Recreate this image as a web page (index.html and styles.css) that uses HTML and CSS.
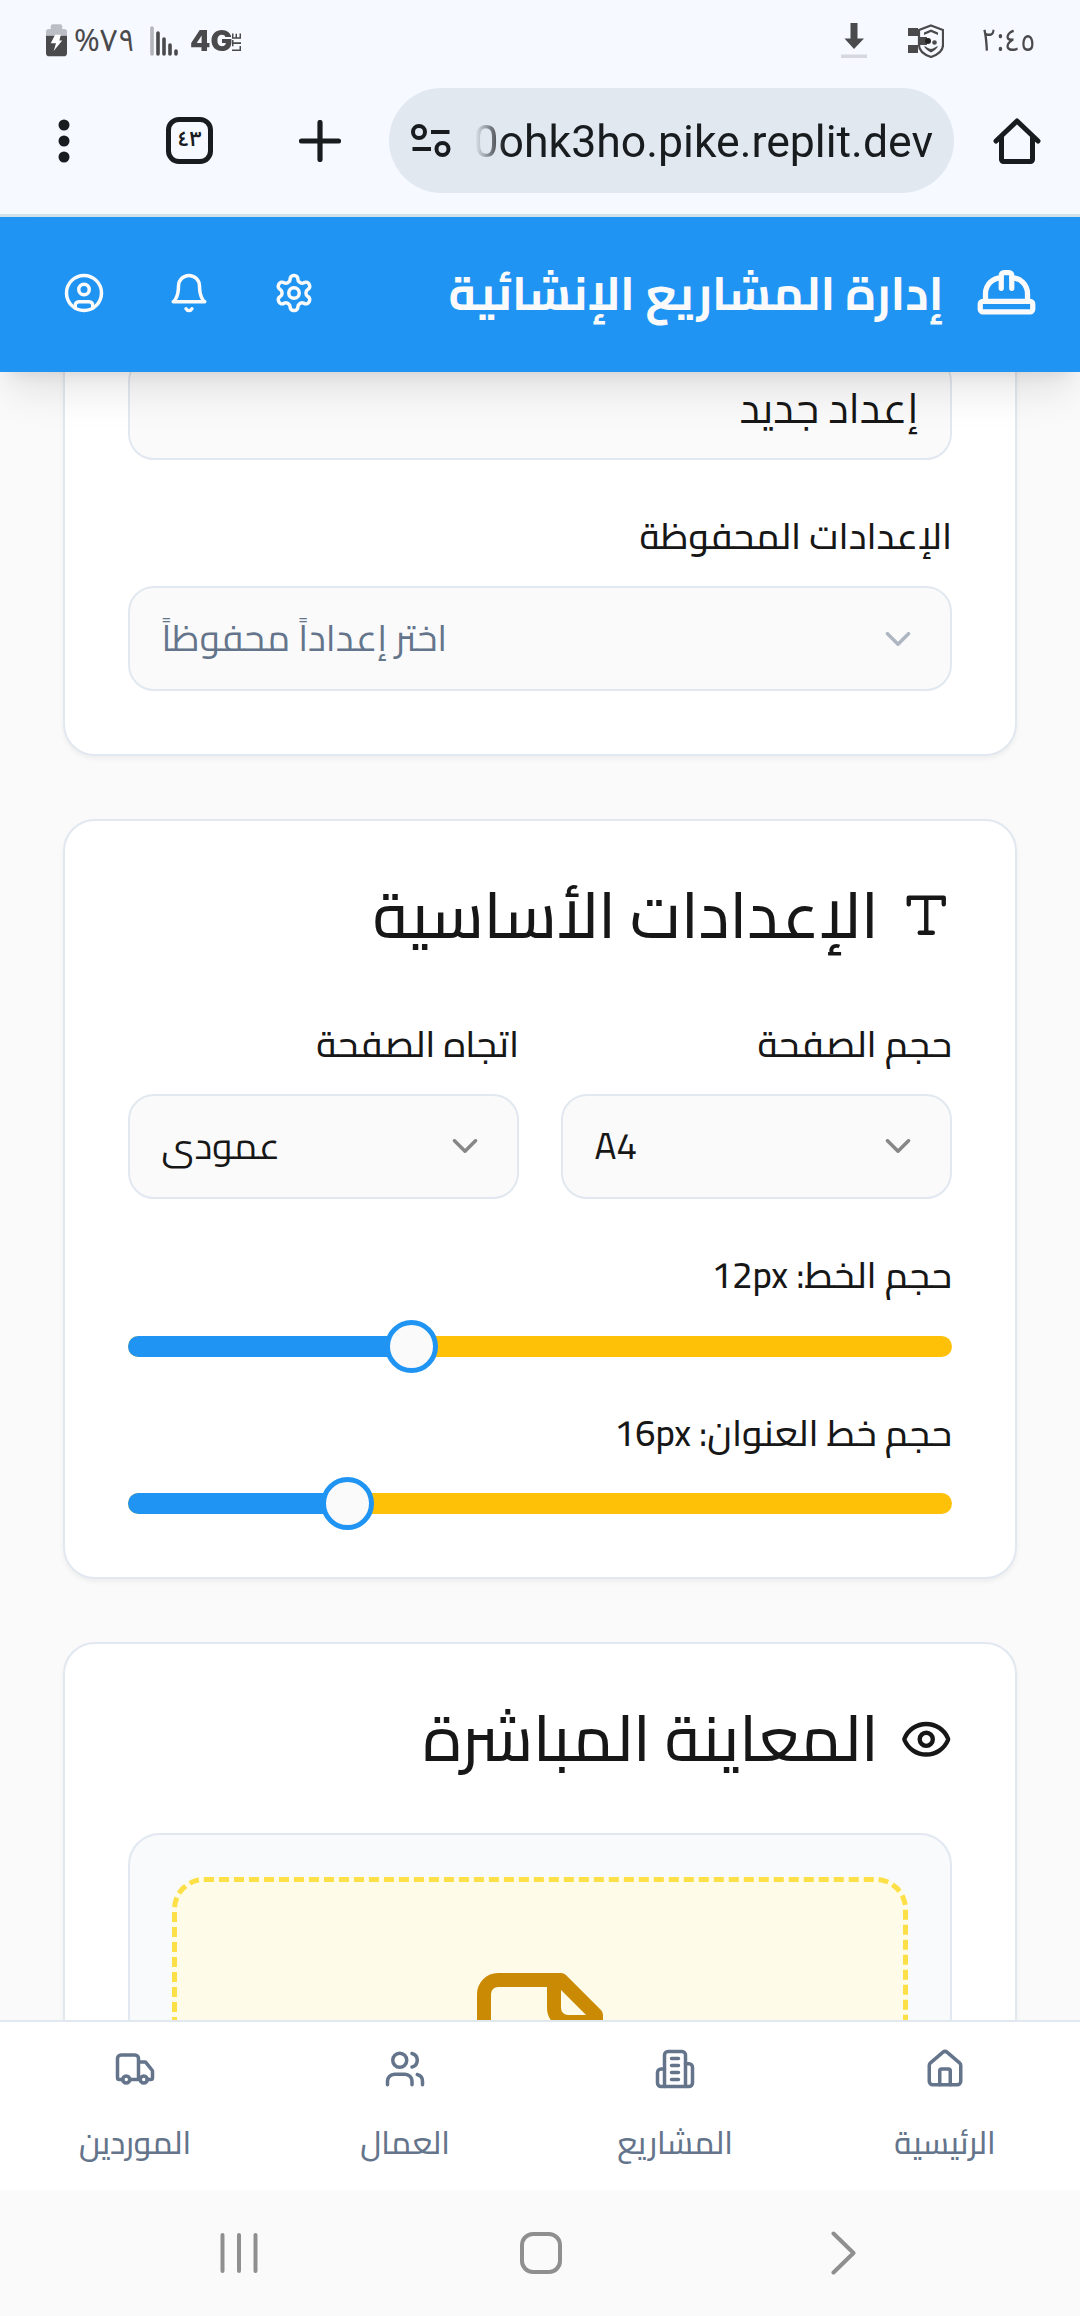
FILE: index.html
```html
<!DOCTYPE html>
<html lang="ar" dir="rtl">
<head>
<meta charset="utf-8">
<title>إدارة المشاريع الإنشائية</title>
<link rel="stylesheet" href="styles.css">
</head>
<body>
<div class="screen">

  <div class="status" dir="ltr">
    <svg class="battery" viewBox="0 0 22 34">
      <path d="M7 0h8a2 2 0 0 1 2 2v3H5V2a2 2 0 0 1 2-2z" fill="#bbbec4"/>
      <path d="M3 5h16a3 3 0 0 1 3 3v4H0V8a3 3 0 0 1 3-3z" fill="#bbbec4"/>
      <path d="M0 12h22v18a3.500 3.500 0 0 1-3.500 3.500h-15A3.500 3.500 0 0 1 0 30z" fill="#4a4a4c"/>
      <path d="M9.500 11h6l-1.500 6h3L8 28l2.500-8H5z" fill="#fff"/>
    </svg>
    <span class="percent">%٧٩</span>
    <svg class="signal" viewBox="0 0 28 30">
      <path d="M2 2v26" stroke="#b3b5ba"/>
      <path d="M8 7v21M14 13v15M20 19v9M26 25v3" stroke="#4a4a4c"/>
    </svg>
    <span class="net">4G</span><span class="lte">LTE</span>
    <svg class="download" viewBox="0 0 26 36">
      <path d="M9.500 0h7v15.500H23L13 26 3.500 15.500h6z" fill="#4a4a4c"/>
      <path d="M0 31.500h26v3.500H0z" fill="#d6d8dd"/>
    </svg>
    <svg class="shield" viewBox="0 0 36 34">
      <path d="M0 4h10v8H0zM0 21h10v8H0zM10 13h9v8h-9z" fill="#4a4a4c"/>
      <path d="M23 1.500 35 6v15c0 6-6 10-12 12-6-2-12-6-12-12V6z" fill="none" stroke="#4a4a4c" stroke-width="2.200"/>
      <path d="M16 11v-2.500l7-3 7 3V11l-7-3z" fill="#4a4a4c"/>
      <circle cx="20" cy="17" r="3" fill="#222"/>
      <circle cx="26.500" cy="18.500" r="2.300" fill="#4a4a4c"/>
      <path d="M16 22c3 .5 4 3 7 3s4-2.500 7-3c-1 3-4 5-7 6.500-3-1.500-6-3.500-7-6.500z" fill="#4a4a4c"/>
    </svg>
    <span class="clock">٢:٤٥</span>
  </div>

  <div class="toolbar" dir="ltr">
    <svg class="dots" viewBox="0 0 12 44"><circle cx="6" cy="6" r="5.500"/><circle cx="6" cy="22" r="5.500"/><circle cx="6" cy="38" r="5.500"/></svg>
    <span class="tabs">٤٣</span>
    <svg class="plus" viewBox="0 0 42 42"><path d="M21 2.500v37M2.500 21h37"/></svg>
    <div class="url">
      <svg class="tune" viewBox="0 0 40 34"><circle cx="8" cy="8" r="6"/><path d="M20 8h18.500M1.500 25H20"/><circle cx="31.500" cy="25" r="6"/></svg>
      <span class="address">0ohk3ho.pike.replit.dev</span>
    </div>
    <svg class="home" viewBox="0 0 48 48"><path d="M3 24 24 4l21 20M8.500 20v22.500a2 2 0 0 0 2 2h27a2 2 0 0 0 2-2V20"/></svg>
  </div>

  <header class="header">
    <svg class="icon hat" viewBox="0 0 24 24"><path d="M2 18a1 1 0 0 0 1 1h18a1 1 0 0 0 1-1v-2a1 1 0 0 0-1-1H3a1 1 0 0 0-1 1v2z"/><path d="M10 10V5a1 1 0 0 1 1-1h2a1 1 0 0 1 1 1v5"/><path d="M4 15v-3a6 6 0 0 1 6-6"/><path d="M14 6a6 6 0 0 1 6 6v3"/></svg>
    <h1 class="brand">إدارة المشاريع الإنشائية</h1>
    <div class="actions">
      <svg class="icon md" viewBox="0 0 24 24"><path d="M12.220 2h-.440a2 2 0 0 0-2 2v.180a2 2 0 0 1-1 1.730l-.430.250a2 2 0 0 1-2 0l-.150-.080a2 2 0 0 0-2.730.730l-.220.380a2 2 0 0 0 .730 2.730l.150.100a2 2 0 0 1 1 1.720v.510a2 2 0 0 1-1 1.740l-.150.090a2 2 0 0 0-.730 2.730l.220.380a2 2 0 0 0 2.730.730l.150-.080a2 2 0 0 1 2 0l.430.250a2 2 0 0 1 1 1.730V20a2 2 0 0 0 2 2h.440a2 2 0 0 0 2-2v-.180a2 2 0 0 1 1-1.730l.430-.250a2 2 0 0 1 2 0l.150.080a2 2 0 0 0 2.730-.730l.220-.390a2 2 0 0 0-.730-2.730l-.150-.080a2 2 0 0 1-1-1.740v-.500a2 2 0 0 1 1-1.740l.150-.090a2 2 0 0 0 .730-2.730l-.220-.380a2 2 0 0 0-2.730-.730l-.150.080a2 2 0 0 1-2 0l-.430-.250a2 2 0 0 1-1-1.730V4a2 2 0 0 0-2-2z"/><circle cx="12" cy="12" r="3"/></svg>
      <svg class="icon md" viewBox="0 0 24 24"><path d="M6 8a6 6 0 0 1 12 0c0 7 3 9 3 9H3s3-2 3-9"/><path d="M10.300 21a1.940 1.940 0 0 0 3.400 0"/></svg>
      <svg class="icon md" viewBox="0 0 24 24"><circle cx="12" cy="12" r="10"/><circle cx="12" cy="10" r="3"/><path d="M7 20.662V19a2 2 0 0 1 2-2h6a2 2 0 0 1 2 2v1.662"/></svg>
    </div>
  </header>

  <main class="content">
    <section class="card card-name">
      <div class="input">إعداد جديد</div>
      <div class="field">
        <span class="label">الإعدادات المحفوظة</span>
        <div class="select muted"><svg class="icon md chevron" viewBox="0 0 24 24"><path d="m6 9 6 6 6-6"/></svg><span class="value">اختر إعداداً محفوظاً</span></div>
      </div>
    </section>

    <section class="card">
      <h2 class="title"><svg class="icon lg" viewBox="0 0 24 24"><path d="M4 7V4h16v3M9 20h6M12 4v16"/></svg>الإعدادات الأساسية</h2>
      <div class="form">
        <div class="pair">
          <div class="group"><span class="label">حجم الصفحة</span>
            <div class="select"><svg class="icon md chevron" viewBox="0 0 24 24"><path d="m6 9 6 6 6-6"/></svg><span class="value">A4</span></div></div>
          <div class="group"><span class="label">اتجاه الصفحة</span>
            <div class="select"><svg class="icon md chevron" viewBox="0 0 24 24"><path d="m6 9 6 6 6-6"/></svg><span class="value clamp">عمودي</span></div></div>
        </div>
        <div class="field slider-field"><span class="label">حجم الخط: 12px</span>
          <div class="slider" dir="ltr"><span class="range" style="width:34.350%"></span><span class="thumb"></span></div></div>
        <div class="field slider-field"><span class="label">حجم خط العنوان: 16px</span>
          <div class="slider" dir="ltr"><span class="range" style="width:26.550%"></span><span class="thumb"></span></div></div>
      </div>
    </section>

    <section class="card card-preview">
      <h2 class="title"><svg class="icon lg" viewBox="0 0 24 24"><path d="M2.062 12.348a1 1 0 0 1 0-.696 10.750 10.750 0 0 1 19.876 0 1 1 0 0 1 0 .696 10.750 10.750 0 0 1-19.876 0"/><circle cx="12" cy="12" r="3"/></svg>المعاينة المباشرة</h2>
      <div class="preview"><div class="dropzone"><svg class="icon doc" viewBox="0 0 24 24"><path d="M15 2H6a2 2 0 0 0-2 2v16a2 2 0 0 0 2 2h12a2 2 0 0 0 2-2V7Z"/><path d="M14 2v4a2 2 0 0 0 2 2h4"/></svg></div></div>
    </section>
  </main>

  <nav class="tabbar">
    <a class="tab"><svg class="icon md" viewBox="0 0 24 24"><path d="M15 21v-8a1 1 0 0 0-1-1h-4a1 1 0 0 0-1 1v8"/><path d="M3 10a2 2 0 0 1 .709-1.528l7-5.999a2 2 0 0 1 2.582 0l7 5.999A2 2 0 0 1 21 10v9a2 2 0 0 1-2 2H5a2 2 0 0 1-2-2z"/></svg>الرئيسية</a>
    <a class="tab"><svg class="icon md" viewBox="0 0 24 24"><path d="M6 22V4a2 2 0 0 1 2-2h8a2 2 0 0 1 2 2v18Z"/><path d="M6 12H4a2 2 0 0 0-2 2v6a2 2 0 0 0 2 2h2M18 9h2a2 2 0 0 1 2 2v9a2 2 0 0 1-2 2h-2M10 6h4M10 10h4M10 14h4M10 18h4"/></svg>المشاريع</a>
    <a class="tab"><svg class="icon md" viewBox="0 0 24 24"><path d="M16 21v-2a4 4 0 0 0-4-4H6a4 4 0 0 0-4 4v2"/><circle cx="9" cy="7" r="4"/><path d="M22 21v-2a4 4 0 0 0-3-3.870M16 3.130a4 4 0 0 1 0 7.750"/></svg>العمال</a>
    <a class="tab"><svg class="icon md" viewBox="0 0 24 24"><path d="M14 18V6a2 2 0 0 0-2-2H4a2 2 0 0 0-2 2v11a1 1 0 0 0 1 1h2M15 18H9M19 18h2a1 1 0 0 0 1-1v-3.650a1 1 0 0 0-.220-.624l-3.480-4.350A1 1 0 0 0 17.520 8H14"/><circle cx="17" cy="18" r="2"/><circle cx="7" cy="18" r="2"/></svg>الموردين</a>
  </nav>

  <div class="system" dir="ltr">
    <svg class="sys recents" viewBox="0 0 38 42"><path d="M2.500 3v36M19 3v36M35.500 3v36"/></svg>
    <svg class="sys homekey" viewBox="0 0 42 42"><rect x="2" y="2" width="38" height="38" rx="11"/></svg>
    <svg class="sys back" viewBox="0 0 26 44"><path d="M2.500 2.500 22.500 22l-20 19.500"/></svg>
  </div>
</div>
</body>
</html>
```
FILE: styles.css
```css
* { box-sizing: border-box; }
body { margin: 0; font-family: Cairo, "Noto Sans Arabic", "DejaVu Sans", sans-serif; color: #171717; background: #fafafa; }
.screen { width: 1080px; height: 2316px; display: flex; flex-direction: column; overflow: hidden; }
svg { display: block; flex: none; }
h1, h2 { margin: 0; }

.icon { fill: none; stroke: currentColor; stroke-width: 2; stroke-linecap: round; stroke-linejoin: round; }
.md { width: 42px; height: 42px; }
.lg { width: 52.5px; height: 52.5px; }

/* phone status bar */
.status { flex: none; height: 81px; padding-left: 46px; display: flex; align-items: center; background: #f6f9ff; color: #4a4a4c; font-family: "Noto Sans Arabic", "Noto Sans", sans-serif; white-space: nowrap; }
.battery { width: 21px; height: 33px; }
.percent { width: 76px; margin-left: 7px; font-size: 31px; line-height: 40px; }
.signal { width: 28px; height: 30px; fill: none; stroke-width: 3.6; stroke-linecap: round; }
.net { width: 40px; margin-left: 12px; font: 900 28px/40px Inter, sans-serif; transform: scaleX(1.04); transform-origin: left; }
.lte { width: 12px; height: 24px; margin-left: 1px; writing-mode: vertical-rl; transform: rotate(180deg) scaleY(.9); font: 700 12px/12px Inter, sans-serif; }
.download { width: 26px; height: 36px; margin-left: 598px; }
.shield { width: 36px; height: 34px; margin-left: 41px; }
.clock { margin-left: 37px; font-size: 31px; line-height: 40px; transform: scaleX(.89); transform-origin: left; }

/* browser toolbar */
.toolbar { flex: none; height: 136px; padding: 7px 0 21px 58px; display: flex; align-items: center; background: #f6f9ff; border-bottom: 3px solid #d3e2ea; color: #191c1f; }
.dots { width: 12px; height: 44px; fill: currentColor; }
.tabs { width: 47px; height: 47px; margin-left: 96px; border: 5px solid; border-radius: 13px; font: 600 21px/34px "Noto Sans Arabic", sans-serif; text-align: center; }
.plus { width: 42px; height: 42px; margin-left: 86px; fill: none; stroke: currentColor; stroke-width: 5.2; stroke-linecap: round; }
.url { width: 565px; height: 105px; margin-left: 48px; padding: 0 21px 0 22px; display: flex; align-items: center; justify-content: space-between; background: #e1e8f0; border-radius: 53px; }
.tune { width: 40px; height: 34px; fill: none; stroke: currentColor; stroke-width: 4; }
.address { width: 462px; padding-top: 2px; display: flex; justify-content: flex-end; font: 44.6px/60px Roboto, sans-serif; -webkit-mask-image: linear-gradient(90deg, transparent 4px, #000 34px); mask-image: linear-gradient(90deg, transparent 4px, #000 34px); }
.home { width: 48px; height: 48px; margin-left: 39px; fill: none; stroke: currentColor; stroke-width: 5; stroke-linecap: round; stroke-linejoin: round; }

/* app header */
.header { flex: none; position: relative; z-index: 1; height: 155px; padding: 0 42px 3px 63px; display: flex; align-items: center; background: #2094f3; color: #fafafa; box-shadow: 0 26px 39px -8px rgba(0,0,0,.1), 0 10px 16px -10px rgba(0,0,0,.1); }
.hat { width: 63px; height: 63px; }
.brand { margin-right: 31.5px; font-size: 47.25px; font-weight: 700; line-height: 74px; white-space: nowrap; }
.actions { margin-right: auto; display: flex; gap: 63px; }

/* scrolled form area */
.content { flex: 1; min-height: 0; overflow: hidden; padding: 0 63px; }
.card { padding: 63px; border: 2px solid #e2e8f0; border-radius: 32px; background: #fff; box-shadow: 0 3px 5px rgba(0,0,0,.05); }
.card + .card { margin-top: 63px; }
.card-name { height: 504px; margin-top: -120px; display: flex; flex-direction: column; justify-content: flex-end; }
.input, .select { height: 105px; padding: 0 31.5px; display: flex; align-items: center; border: 2px solid #e2e8f0; border-radius: 26px; background: #fafafa; }
.input { font-size: 42px; line-height: 63px; }
.select { justify-content: space-between; font-size: 36.75px; }
.value { height: 52.5px; line-height: 52.5px; }
.clamp { height: 51px; margin-bottom: 1.5px; overflow: hidden; }
.chevron { opacity: .5; }
.muted { color: #64748b; }
.field { margin-top: 57px; display: flex; flex-direction: column; gap: 31px; }
.group { display: flex; flex-direction: column; gap: 31px; }
.label { padding-top: 1px; font-size: 36.75px; line-height: 36.75px; font-weight: 500; }
.title { display: flex; align-items: center; gap: 21px; font-size: 64px; line-height: 63px; font-weight: 500; }
.form { margin-top: 78px; }
.pair { display: grid; grid-template-columns: 1fr 1fr; gap: 42px; }
.slider-field { gap: 42px; }
.slider { height: 21px; display: flex; align-items: center; border-radius: 11px; background: #ffc107; }
.range { height: 21px; border-radius: 11px 0 0 11px; background: #2094f3; }
.thumb { flex: none; width: 53px; height: 53px; margin-left: -26px; border: 5px solid #2094f3; border-radius: 50%; background: #fafafa; }
.card-preview { height: 900px; }
.preview { height: 700px; margin-top: 63px; padding: 42px; border: 2px solid #e2e8f0; border-radius: 32px; background: #f8fafc; }
.dropzone { height: 610px; padding-top: 84px; border: 5.25px dashed #fde047; border-radius: 32px; background: #fefce8; color: #ca8a04; }
.doc { width: 168px; height: 168px; margin: 0 auto; }

/* bottom navigation */
.tabbar { flex: none; height: 170px; display: grid; grid-template-columns: repeat(4, 1fr); border-top: 2px solid #e2e8f0; background: #fff; color: #64748b; }
.tab { padding-top: 26px; display: flex; flex-direction: column; align-items: center; gap: 32px; font-size: 31.5px; line-height: 42px; font-weight: 500; }

.system { flex: none; height: 126px; padding-left: 220px; display: flex; align-items: center; background: #fafafa; }
.sys { fill: none; stroke: #8f8f8f; stroke-width: 4; stroke-linecap: round; stroke-linejoin: round; }
.recents { width: 38px; height: 42px; }
.homekey { width: 42px; height: 42px; margin-left: 262px; }
.back { width: 26px; height: 44px; margin-left: 269px; }
```
